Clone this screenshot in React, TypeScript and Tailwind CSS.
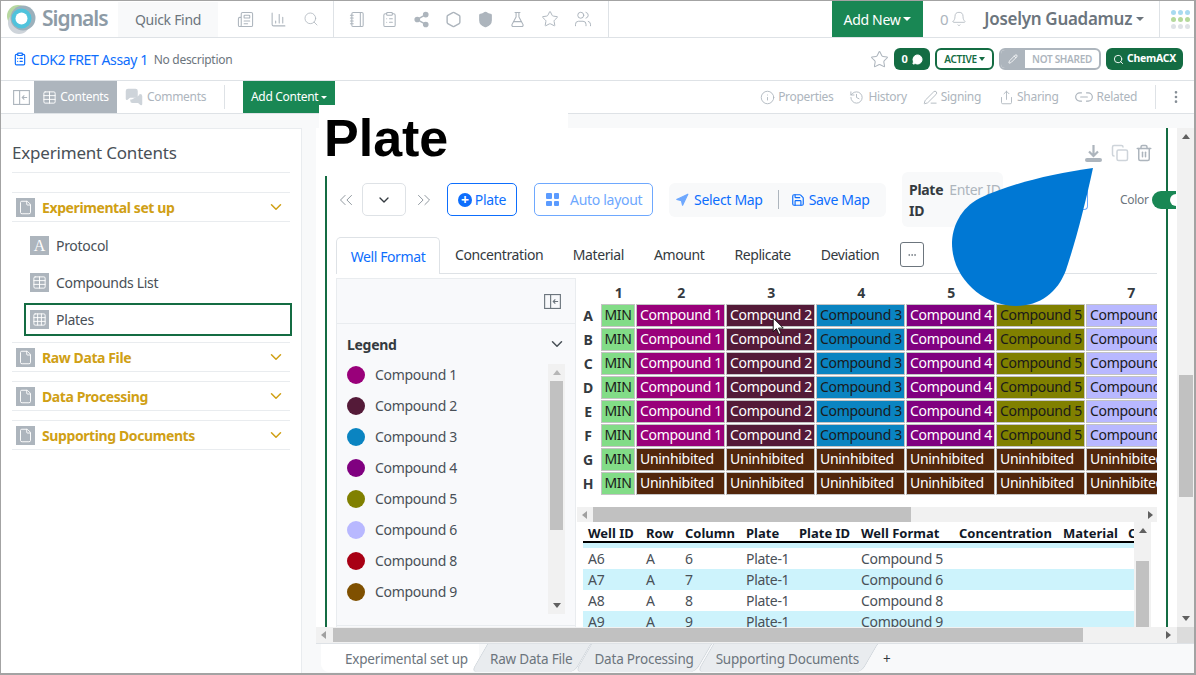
import {
  Bell, ChartColumn, ChevronDown, ChevronsLeft, ChevronsRight, ClipboardList, Copy, Ellipsis, EllipsisVertical,
  File, FlaskConical, Grid3x3, History, Info, Link2, MessageCircle, Navigation, Newspaper, Notebook, Pencil, PenLine, Save, Search,
  Share, Share2, Shield, Star, Table, Trash2, Users, Hexagon, MessagesSquare,
} from "lucide-react"

const gray = "#adb5bd"

function PanelIcon({ className }: { className?: string }) {
  return (
    <svg viewBox="0 0 18 16" className={className} fill="none" stroke="currentColor" strokeWidth="1.2">
      <rect x="0.6" y="0.6" width="16.8" height="14.8" />
      <path d="M7 0.6V15.4M15 8H10M12 5.8L9.8 8L12 10.2" />
    </svg>
  )
}

function Tri({ dir, className }: { dir: "up" | "down" | "left" | "right"; className?: string }) {
  const shape = {
    up: "border-x-[4px] border-x-transparent border-b-[5px] border-b-[#606060]",
    down: "border-x-[4px] border-x-transparent border-t-[5px] border-t-[#606060]",
    left: "border-y-[4px] border-y-transparent border-r-[5px] border-r-[#a0a0a0]",
    right: "border-y-[4px] border-y-transparent border-l-[5px] border-l-[#606060]",
  }[dir]
  return <span className={`block w-0 h-0 ${shape} ${className || ""}`} />
}

function Section({ title }: { title: string }) {
  return (
    <div className="h-[30px] flex items-center border-y border-[#e9ecef] pl-1">
      <span className="w-[19px] h-[19px] bg-[#adb5bd] flex items-center justify-center">
        <File size={15} color="#fff" strokeWidth={1.5} />
      </span>
      <span className="ml-[7px] text-[14px] font-bold tracking-[-0.4px] text-[#d0a015]">{title}</span>
      <ChevronDown size={18} color="#d0a015" className="ml-auto mr-[5px]" />
    </div>
  )
}

function Sidebar() {
  return (
    <aside className="w-[301px] shrink-0 bg-white border-t border-r border-[#e9ecef] px-[11px]">
      <div className="h-[44px] flex items-center pt-[5px] text-[17px] tracking-[-0.2px] text-[#495057] border-b border-[#e9ecef]">Experiment Contents</div>
      <div className="mt-[19px]"><Section title="Experimental set up" /></div>
      <div className="pt-[5px] text-[14px] text-[#495057]">
        <div className="h-[37px] flex items-center pl-[18px]">
          <span className="w-[19px] h-[19px] bg-[#adb5bd] text-white text-[16px] font-['Liberation_Serif',serif] flex items-center justify-center">A</span>
          <span className="ml-[7px]">Protocol</span>
        </div>
        <div className="h-[37px] flex items-center pl-[18px]">
          <span className="w-[19px] h-[19px] bg-[#adb5bd] flex items-center justify-center"><Table size={15} color="#fff" strokeWidth={1.5} /></span>
          <span className="ml-[7px]">Compounds List</span>
        </div>
        <div className="h-[33px] mt-[2px] ml-3 w-[268px] flex items-center pl-[4px] border-2 border-[#146c43]">
          <span className="w-[19px] h-[19px] bg-[#adb5bd] flex items-center justify-center"><Grid3x3 size={15} color="#fff" strokeWidth={1.5} /></span>
          <span className="ml-[7px]">Plates</span>
        </div>
      </div>
      <div className="mt-[6px]"><Section title="Raw Data File" /></div>
      <div className="mt-[9px]"><Section title="Data Processing" /></div>
      <div className="mt-[9px]"><Section title="Supporting Documents" /></div>
    </aside>
  )
}

const legend = [
  ["Compound 1", "#99007a"], ["Compound 2", "#541a38"], ["Compound 3", "#0a84c1"], ["Compound 4", "#800080"],
  ["Compound 5", "#808000"], ["Compound 6", "#b8b8ff"], ["Compound 8", "#a80014"], ["Compound 9", "#7f5000"],
]

function Legend() {
  return (
    <div className="w-[240px] h-[350px] shrink-0 bg-[#f8f9fb] border border-[#e9ecef] flex flex-col">
      <div className="h-[45px] shrink-0 border-b border-[#e9ecef] flex items-center justify-end pr-[14px] text-[#6c757d]">
        <PanelIcon className="w-[17px] h-[15px]" />
      </div>
      <div className="h-[40px] shrink-0 flex items-center justify-between pl-[10px] pr-[9px]">
        <span className="text-[14px] font-bold text-[#343a40]">Legend</span>
        <ChevronDown size={18} color="#495057" />
      </div>
      <div className="flex h-[250px] shrink-0">
        <div className="w-[211px] pl-[10px] -mt-[5px]">
          {legend.map(([name, color]) => (
            <div key={name} className="h-[31px] flex items-center">
              <span className="w-[18px] h-[18px] rounded-full" style={{ backgroundColor: color }} />
              <span className="ml-[10px] text-[14px] text-[#495057]">{name}</span>
            </div>
          ))}
        </div>
        <div className="w-[17px] bg-[#f1f1f1] flex flex-col items-center">
          <div className="h-[17px] flex items-center"><Tri dir="up" className="opacity-40" /></div>
          <div className="w-[13px] h-[149px] bg-[#c1c1c1]" />
          <div className="mt-auto h-[17px] flex items-center"><Tri dir="down" /></div>
        </div>
      </div>
      <div className="mt-[11px] border-t border-[#e9ecef]" />
    </div>
  )
}

const comp: Record<string, [string, string]> = {
  c1: ["Compound 1", "bg-[#99007a] text-white"],
  c2: ["Compound 2", "bg-[#541a38] text-white"],
  c3: ["Compound 3", "bg-[#0a84c1] text-[#1a1a1a]"],
  c4: ["Compound 4", "bg-[#800080] text-white"],
  c5: ["Compound 5", "bg-[#808000] text-[#1a1a1a]"],
  c6: ["Compound 6", "bg-[#b8b8ff] text-[#1a1a1a]"],
  un: ["Uninhibited", "bg-[#52260b] text-white"],
}

function Cell({ k }: { k: string }) {
  const [label, cls] = comp[k]
  return (
    <div className={`h-[23px] mb-px mr-px border border-[#c4c4c4] pl-[3px] text-[14px] leading-[20px] whitespace-nowrap overflow-hidden ${cls}`}>
      {label}
    </div>
  )
}

function PlateGrid() {
  const rows = ["A", "B", "C", "D", "E", "F", "G", "H"]
  const columns = ["c1", "c2", "c3", "c4", "c5", "c6"]
  return (
    <div className="h-[229px] bg-white overflow-hidden pt-[6px]">
      <div className="grid grid-cols-[24px_35px_repeat(6,90px)] w-[599px]">
        <div className="h-[20px]" />
        {[1, 2, 3, 4, 5, 6, 7].map((n) => (
          <div key={n} className="h-[20px] text-center text-[14px] font-bold text-[#343a40] leading-[17px]">{n}</div>
        ))}
        {rows.map((r, i) => (
          <div key={r} className="contents">
            <div className="h-[24px] text-center pr-[2px] text-[14px] font-bold text-[#343a40] leading-[24px]">{r}</div>
            <div className="h-[23px] mb-px mr-px border border-[#c4c4c4] bg-[#82dc87] text-[#1a1a1a] text-center text-[14px] leading-[20px]">MIN</div>
            {columns.map((c) => <Cell key={c} k={i < 6 ? c : "un"} />)}
          </div>
        ))}
      </div>
    </div>
  )
}

const tableRows = [
  ["A6", "A", "6", "Plate-1", "", "Compound 5"],
  ["A7", "A", "7", "Plate-1", "", "Compound 6"],
  ["A8", "A", "8", "Plate-1", "", "Compound 8"],
  ["A9", "A", "9", "Plate-1", "", "Compound 9"],
]
const headers = ["Well ID", "Row", "Column", "Plate", "Plate ID", "Well Format", "Concentration", "Material", "C"]
const tableCols = "grid grid-cols-[58px_39px_61px_53px_62px_98px_104px_65px_11px]"

function WellTable() {
  return (
    <div className="flex h-[106px] bg-white overflow-hidden">
      <div className="ml-[6px] w-[551px] overflow-hidden">
        <div className={`${tableCols} h-[21px] border-b-2 border-black text-[13px] font-bold tracking-normal text-[#111827] leading-[22px]`}>
          {headers.map((h) => <div key={h} className="pl-[5px] whitespace-nowrap">{h}</div>)}
        </div>
        <div className="h-[5px] bg-[#cdf3fc]" />
        {tableRows.map((row, i) => (
          <div key={row[0]} className={`${tableCols} h-[21px] text-[14px] text-[#495057] leading-[21px] ${i % 2 ? "bg-[#cdf3fc]" : "bg-white"}`}>
            {row.map((v, j) => <div key={j} className="pl-[5px] whitespace-nowrap">{v}</div>)}
          </div>
        ))}
      </div>
      <div className="w-[17px] bg-[#f1f1f1] flex flex-col items-center">
        <div className="h-[17px] flex items-center"><Tri dir="up" /></div>
        <div className="mt-[22px] w-[13px] flex-1 bg-[#c1c1c1]" />
      </div>
    </div>
  )
}

function Toolbar() {
  return (
    <div className="h-[47px] flex items-center pl-[8px] text-[14px] [&>*]:shrink-0">
      <ChevronsLeft size={22} color="#868e96" strokeWidth={1} />
      <div className="ml-[5px] w-[44px] h-[33px] border border-[#dee2e6] rounded-[5px] flex items-center justify-center">
        <ChevronDown size={16} color="#343a40" />
      </div>
      <ChevronsRight size={22} color="#868e96" strokeWidth={1} className="ml-[7px]" />
      <button className="ml-[12px] w-[70px] h-[33px] border border-[#0d6efd] rounded-[5px] flex items-center justify-center gap-[3px] text-[#0d6efd]">
        <span className="w-[14px] h-[14px] rounded-full bg-[#0d6efd] text-white text-[14px] font-bold leading-[13px]">+</span>
        Plate
      </button>
      <button className="ml-[17px] w-[119px] h-[33px] border border-[#6ea8fe] rounded-[5px] flex items-center pl-[11px] text-[#6ea8fe]">
        <span className="grid grid-cols-2 gap-[2px] w-[13px]">
          <i className="w-[5.5px] h-[5.5px] bg-[#5b9bff] rounded-[1px]" /><i className="w-[5.5px] h-[5.5px] bg-[#5b9bff] rounded-[1px]" />
          <i className="w-[5.5px] h-[5.5px] bg-[#5b9bff] rounded-[1px]" /><i className="w-[5.5px] h-[5.5px] bg-[#5b9bff] rounded-[1px]" />
        </span>
        <span className="ml-[11px]">Auto layout</span>
      </button>
      <div className="ml-[16px] w-[217px] h-[34px] bg-[#f8f9fa] rounded-[6px] flex items-center pl-[6px] text-[#0d6efd]">
        <Navigation size={14} color="#6ea8fe" fill="#6ea8fe" />
        <span className="ml-[5px]">Select Map</span>
        <span className="ml-[15px] h-[19px] w-px bg-[#adb5bd]" />
        <Save size={14} className="ml-[12px]" />
        <span className="ml-[4px]">Save Map</span>
      </div>
      <div className="ml-[16px] w-[101px] h-[55px] bg-[#f8f9fa] rounded-[6px] pl-[7px] pt-[7px] font-bold text-[#343a40] leading-[21px] whitespace-nowrap">
        <span>Plate</span>
        <span className="ml-[6px] font-normal text-[#adb5bd]">Enter ID</span>
        <div>ID</div>
      </div>
      <div className="w-[86px] h-[21px] -ml-[1px] border-r border-b border-[#6ea8fe] rounded-br-[4px]" />
      <span className="ml-[32px] text-[12px] text-[#6c757d]">Color</span>
      <span className="ml-[3px] w-[24px] h-[18px] relative z-10 rounded-l-full bg-[#198754] flex items-center justify-end">
        <i className="w-[6px] h-[12px] bg-white rounded-l-full" />
      </span>
    </div>
  )
}

function TabsRow() {
  const tabs = ["Concentration", "Material", "Amount", "Replicate", "Deviation"]
  return (
    <div className="ml-[9px] w-[821px] h-[37px] flex border-b border-[#dee2e6] text-[14px] tracking-[-0.4px] text-[#343a40]">
      <div className="w-[104px] h-[37px] bg-white border border-b-0 border-[#dee2e6] rounded-t-[5px] flex items-center justify-center text-[#0d6efd]">Well Format</div>
      <div className="flex items-center pb-[1px]">
        {tabs.map((t) => <span key={t} className="px-[15px] first:pr-[14.5px] last:pl-[14.5px]">{t}</span>)}
        <span className="ml-[6px] w-[24px] h-[25px] border border-[#6c757d] rounded-[3px] flex items-center justify-center text-[#6c757d]"><Ellipsis size={10} /></span>
      </div>
    </div>
  )
}

function Content() {
  return (
    <div className="flex-1 min-w-0 h-[499px] bg-white pl-[9px] pr-[9px] overflow-hidden">
      <div className="h-full border-r-2 border-[#146c43] flex flex-col">
        <div className="h-[48px] shrink-0 flex items-center justify-end gap-[6px] pr-[13px] pt-[2px]">
          <svg viewBox="0 0 19 19" className="w-[19px] h-[19px]" fill="none" stroke={gray} strokeWidth="2.2">
            <path d="M9.5 1V11.5M5 7.5L9.5 12L14 7.5" />
            <rect x="1" y="14" width="17" height="4" rx="2" fill={gray} stroke="none" />
          </svg>
          <Copy size={18} color="#ced4da" className="ml-[2px]" />
          <Trash2 size={18} color={gray} />
        </div>
        <div className="border-l-2 border-[#146c43] flex-1">
          <Toolbar />
          <div className="mt-[14px]"><TabsRow /></div>
          <div className="flex ml-[9px] mt-[4px]">
            <Legend />
            <div className="w-[580px] ml-px">
              <PlateGrid />
              <div className="h-[15px] bg-[#f1f1f1] flex items-center">
                <Tri dir="left" className="ml-[5px]" />
                <div className="ml-[6px] w-[318px] h-[15px] bg-[#c1c1c1]" />
                <Tri dir="right" className="ml-auto mr-[4px]" />
              </div>
              <WellTable />
            </div>
          </div>
        </div>
      </div>
    </div>
  )
}

function BottomTabs() {
  const tabs = ["Raw Data File", "Data Processing", "Supporting Documents"]
  return (
    <div className="flex-1 flex items-stretch bg-[#f8f9fa] border-t border-[#dee2e6] text-[13.5px] tracking-[-0.2px] text-[#6c757d] overflow-hidden">
      <div className="h-[28px] ml-[5px] w-[158px] pl-[24px] pt-[2px] bg-white rounded-b-[8px] flex items-center shrink-0">Experimental set up</div>
      {tabs.map((t) => (
        <div key={t} className="relative h-[28px] px-[11px] pt-[2px] flex items-center shrink-0">
          <span className="absolute inset-0 -skew-x-[30deg] bg-[#e9ecef] border-x border-[#ced4da] rounded-b-[6px]" />
          <span className="relative">{t}</span>
        </div>
      ))}
      <span className="ml-[13px] h-[28px] pt-[2px] flex items-center text-[#343a40]">+</span>
    </div>
  )
}

export default function App() {
  return (
    <div className="relative w-[1196px] h-[675px] overflow-hidden bg-white border border-r-2 border-b-2 border-[#a3a3a3] flex flex-col tracking-[-0.3px] font-['Noto_Sans',sans-serif]">
      {/* top nav */}
      <header className="h-[37px] shrink-0 flex items-center border-b border-[#dee2e6] text-[#adb5bd] [&>*]:shrink-0">
        <svg viewBox="0 0 30 32" className="ml-[5px] w-[30px] h-[32px]">
          <circle cx="12" cy="13" r="11" fill="#b7d8a0" />
          <circle cx="13" cy="20" r="11" fill="#ced4da" />
          <circle cx="17" cy="15" r="12.5" fill="#9cb0bb" />
          <circle cx="15.5" cy="15.5" r="10" fill="#4fc3dc" />
          <circle cx="15.5" cy="15.5" r="6" fill="#fff" />
        </svg>
        <span className="ml-[6px] w-[70px] text-[21px] font-semibold tracking-[-1px] text-[#8d9ba6]">Signals</span>
        <div className="ml-[6px] w-[100px] h-[35px] bg-[#f8f9fa] flex items-center justify-center text-[14px] text-[#6c757d]">Quick Find</div>
        <div className="ml-[19px] flex gap-[16px] items-center">
          <Newspaper size={17} strokeWidth={1.5} />
          <ChartColumn size={17} strokeWidth={1.5} />
          <Search size={16} strokeWidth={1.2} />
        </div>
        <div className="ml-[14px] h-[36px] w-px bg-[#dee2e6]" />
        <div className="ml-[15px] flex gap-[15px] items-center">
          <Notebook size={17} strokeWidth={1.5} />
          <ClipboardList size={17} strokeWidth={1.5} />
          <Share2 size={17} fill={gray} />
          <Hexagon size={17} strokeWidth={2} />
          <Shield size={17} fill={gray} />
          <FlaskConical size={17} strokeWidth={1.5} />
          <Star size={18} strokeWidth={1.3} />
          <Users size={18} strokeWidth={1.3} />
        </div>
        <div className="ml-[16px] h-[36px] w-px bg-[#dee2e6]" />
        <button className="ml-[223px] w-[91px] h-[36px] bg-[#198754] text-white text-[14px] flex items-center justify-center gap-[3px]">
          Add New <span className="border-x-[4px] border-x-transparent border-t-[4px] border-t-white" />
        </button>
        <span className="ml-[17px] text-[15px]">0</span>
        <Bell size={16} strokeWidth={1.2} className="ml-[3px]" />
        <span className="ml-[17px] text-[17px] font-semibold text-[#6c757d] whitespace-nowrap">Joselyn Guadamuz</span>
        <span className="ml-[4px] border-x-[4px] border-x-transparent border-t-[4px] border-t-[#6c757d]" />
        <div className="ml-[15px] h-[36px] w-px bg-[#dee2e6]" />
        <div className="ml-[11px] grid grid-cols-3 gap-[2px]">
          {["bg-[#a8daf0]", "bg-[#a8daf0]", "bg-[#a8daf0]", "bg-[#b5d99c]", "bg-[#b5d99c]", "bg-[#b5d99c]", "bg-[#dee2e6]", "bg-[#dee2e6]", "bg-[#dee2e6]"].map((c, i) => (
            <i key={i} className={`w-[5px] h-[5px] rounded-full ${c}`} />
          ))}
        </div>
      </header>

      {/* title row */}
      <div className="h-[43px] shrink-0 flex items-center border-b border-[#dee2e6] pl-[12px] [&>*]:shrink-0">
        <ClipboardList size={14} color="#0d6efd" />
        <span className="ml-[4px] text-[14px] tracking-[-0.4px] text-[#0d6efd]">CDK2 FRET Assay 1</span>
        <span className="ml-[6px] pt-[1px] text-[12px] text-[#6c757d]">No description</span>
        <Star size={19} color={gray} strokeWidth={1.3} className="ml-auto" />
        <span className="ml-[5px] w-[36px] h-[22px] bg-[#146c43] rounded-[6px] flex items-center justify-center gap-[4px] text-white text-[11px] font-bold">
          0 <MessageCircle size={11} fill="#fff" />
        </span>
        <span className="ml-[5px] w-[59px] h-[22px] border-2 border-[#146c43] rounded-[6px] flex items-center justify-center gap-[2px] text-[#146c43] text-[10px] font-semibold">
          ACTIVE <span className="border-x-[3.5px] border-x-transparent border-t-[4px] border-t-[#146c43]" />
        </span>
        <span className="ml-[5px] w-[102px] h-[22px] border-2 border-[#adb5bd] rounded-[6px] flex items-center overflow-hidden text-[10px] font-semibold text-[#adb5bd]">
          <span className="w-[24px] h-full bg-[#adb5bd] flex items-center justify-center"><Pencil size={10} color="#fff" /></span>
          <span className="flex-1 text-center">NOT SHARED</span>
        </span>
        <span className="ml-[5px] mr-[11px] w-[77px] h-[22px] bg-[#146c43] rounded-[6px] flex items-center justify-center gap-[3px] text-white text-[10.5px] font-bold">
          <Search size={11} /> ChemACX
        </span>
      </div>

      {/* sub toolbar */}
      <div className="h-[33px] shrink-0 flex items-center border-b border-[#dee2e6] text-[12px] text-[#adb5bd] [&>*]:shrink-0">
        <PanelIcon className="ml-[12px] w-[17px] h-[15px]" />
        <div className="ml-[4px] w-[83px] h-full bg-[#adb5bd] flex items-center justify-center gap-[3px] text-white">
          <Table size={15} strokeWidth={1.5} /> Contents
        </div>
        <MessagesSquare size={18} fill="#ced4da" color="#ced4da" className="ml-[8px]" />
        <span className="ml-[4px]">Comments</span>
        <span className="ml-[18px] h-[24px] w-px bg-[#dee2e6]" />
        <button className="ml-[18px] w-[92px] h-full bg-[#198754] text-white flex items-center justify-center gap-[3px]">
          Add Content <span className="border-x-[3px] border-x-transparent border-t-[3px] border-t-white" />
        </button>
        <Info size={15} strokeWidth={1.4} className="ml-[425px]" />
        <span className="ml-[3px]">Properties</span>
        <History size={15} strokeWidth={1.4} className="ml-[16px]" />
        <span className="ml-[4px]">History</span>
        <PenLine size={15} strokeWidth={1.4} className="ml-[16px]" />
        <span className="ml-[3px]">Signing</span>
        <Share size={15} strokeWidth={1.4} className="ml-[18px]" />
        <span className="ml-[3px]">Sharing</span>
        <Link2 size={20} strokeWidth={1.4} className="ml-[15px]" />
        <span className="ml-[3px]">Related</span>
        <span className="ml-[18px] h-[24px] w-px bg-[#dee2e6]" />
        <EllipsisVertical size={16} className="ml-[12px] text-[#868e96]" />
      </div>

      {/* body */}
      <div className="flex-1 min-h-0 flex bg-[#f8f9fa] pt-[14px]">
        <Sidebar />
        <main className="ml-[14px] flex-1 min-w-0 flex flex-col">
          <div className="flex shrink-0">
            <Content />
            <div className="w-[17px] bg-[#f1f1f1] flex flex-col items-center">
              <div className="h-[17px] flex items-center"><Tri dir="up" /></div>
              <div className="mt-[230px] w-[14px] h-[122px] bg-[#c1c1c1]" />
              <div className="mt-auto h-[17px] flex items-center"><Tri dir="down" /></div>
            </div>
          </div>
          <div className="h-[16px] shrink-0 flex items-center bg-[#f1f1f1]">
            <Tri dir="left" className="ml-[5px]" />
            <div className="ml-[7px] w-[750px] h-[14px] bg-[#c1c1c1]" />
            <Tri dir="right" className="ml-[83px]" />
            <div className="ml-auto w-[17px] h-full bg-[#dcdcdc]" />
          </div>
          <BottomTabs />
        </main>
      </div>

      {/* white block behind the Plate title */}
      <div className="absolute left-[318px] top-[104px] w-[249px] h-[70px] bg-white pl-[5px] text-[52px] leading-[66px] tracking-normal font-bold text-black font-['Liberation_Sans',sans-serif]">Plate</div>
      {/* big callout drop */}
      <svg viewBox="945 165 150 145" className="absolute left-[944px] top-[164px] w-[150px] h-[145px]">
        <path d="M1093 168C1050 174 1010 184 980 198C960 208 952 228 952 243C952 280 985 306 1016 306C1040 306 1058 292 1066 270C1076 240 1085 205 1093 168Z" fill="#0078d4" />
      </svg>
      {/* mouse pointer */}
      <svg viewBox="0 0 12 18" className="absolute left-[771px] top-[316px] w-[13px] h-[19px]">
        <path d="M1 1V14L4 11L6.5 16.5L8.5 15.5L6 10.5H10.5Z" fill="#fff" stroke="#000" strokeWidth="0.8" />
      </svg>
    </div>
  )
}
